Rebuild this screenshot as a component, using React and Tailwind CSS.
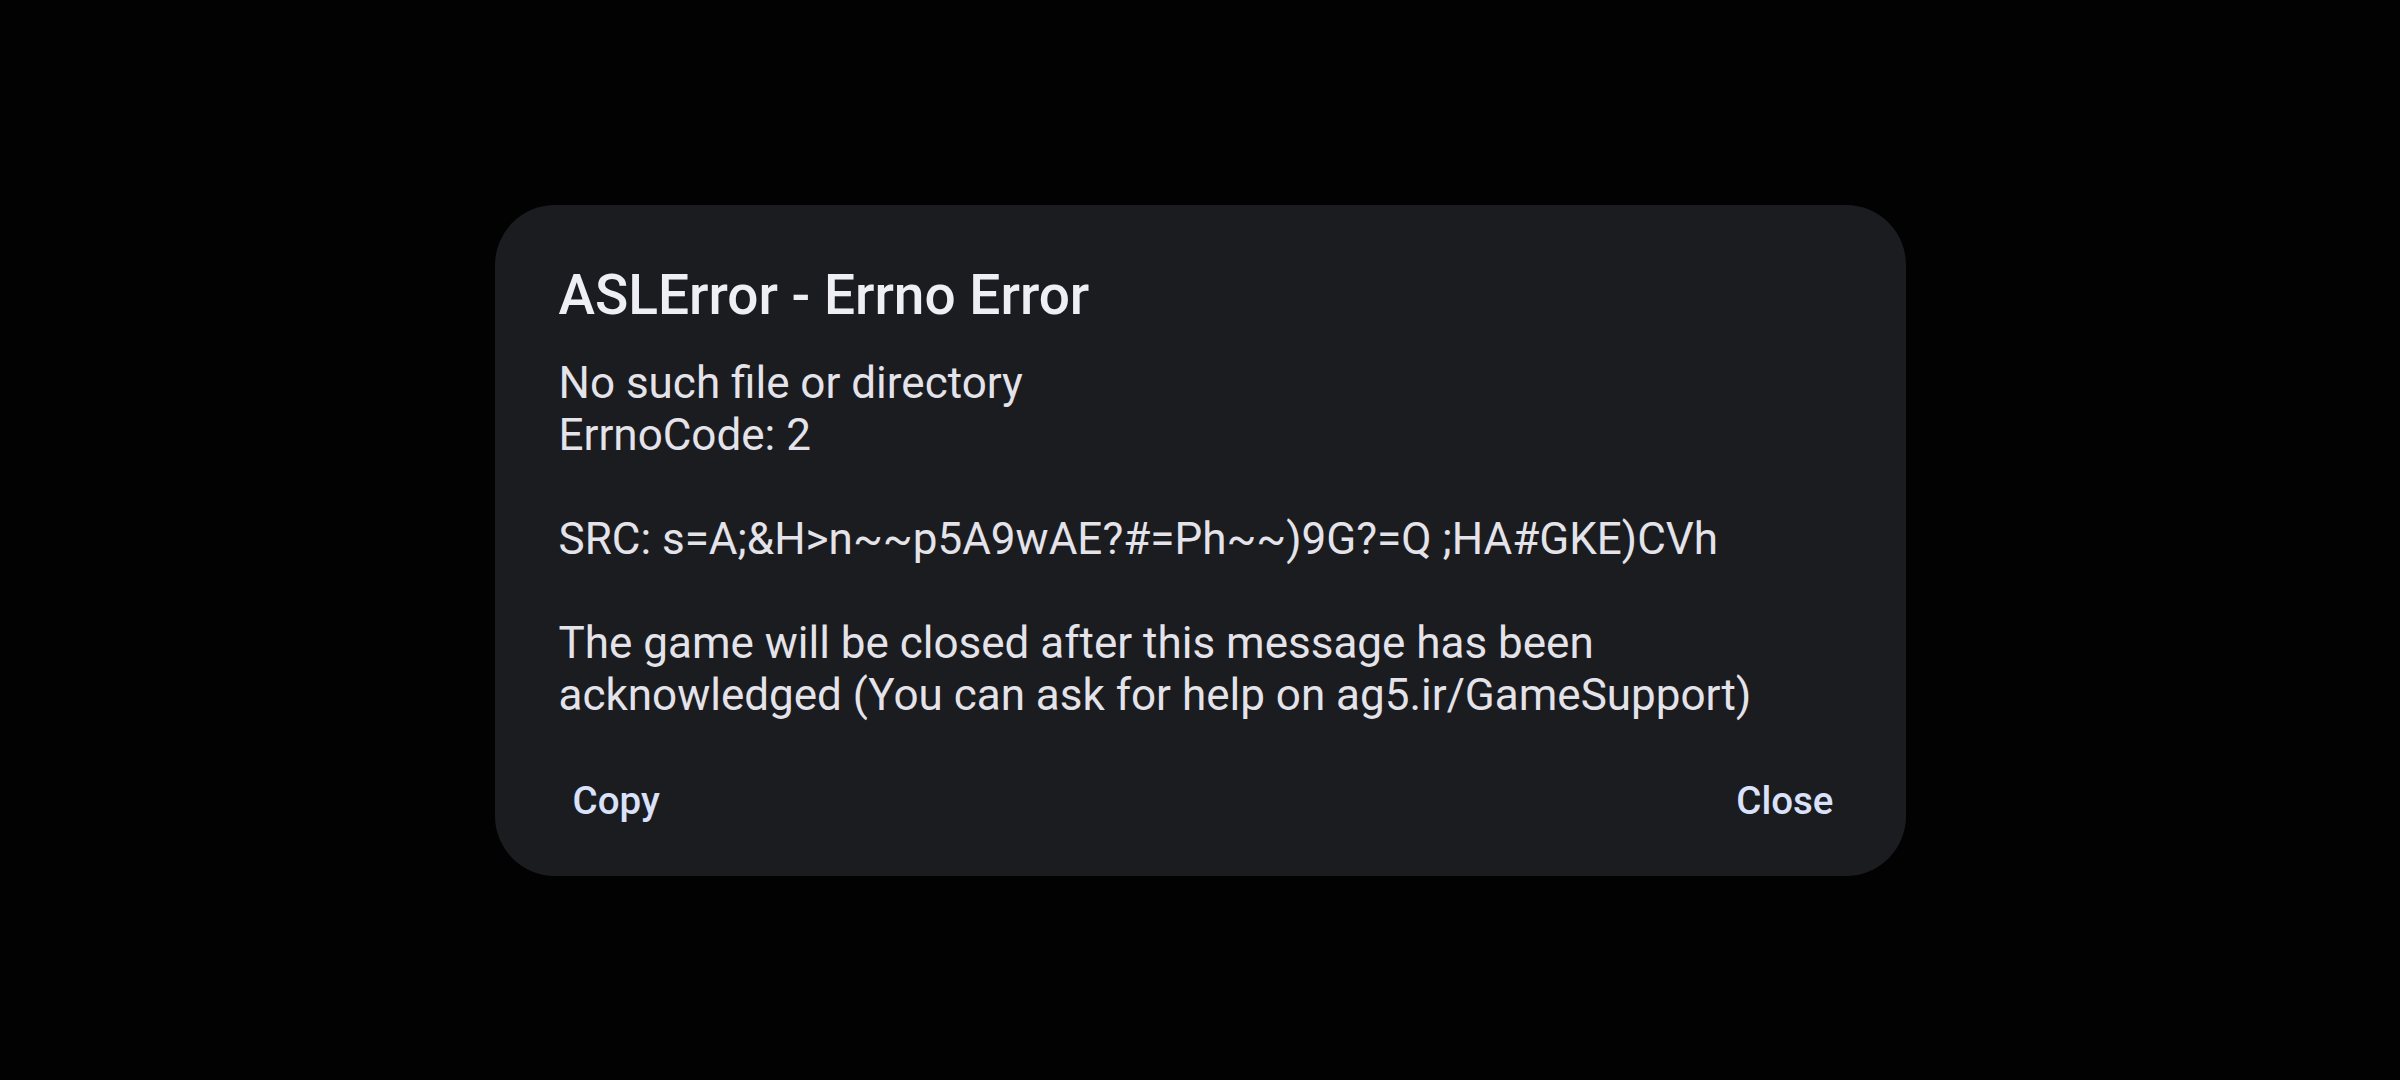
import React from 'react';

const font = { fontFamily: 'Roboto, "Noto Sans", sans-serif' };

function ErrorDialog() {
  const copy = () => {};
  const close = () => {};

  return (
    <div className="w-[1411px] rounded-[60px] bg-[#1b1c20] pt-[58px] pb-[49px]" style={font}>
      <div className="px-[64px]">
        <h2 className="text-[55px] leading-[64px] font-medium text-[#efeef4]">ASLError - Errno Error</h2>
        <div className="mt-[30px] text-[44px] leading-[52px] text-[#e4e3ea]">
          <div>No such file or directory</div>
          <div>ErrnoCode: 2</div>
          <div className="h-[52px]"></div>
          <div>SRC: s=A;&amp;H&gt;n~~p5A9wAE?#=Ph~~)9G?=Q ;HA#GKE)CVh</div>
          <div className="h-[52px]"></div>
          <div>The game will be closed after this message has been</div>
          <div>acknowledged (You can ask for help on ag5.ir/GameSupport)</div>
        </div>
      </div>
      <div className="mt-[54px] flex items-center justify-between px-[64px]">
        <button onClick={copy} className="ml-[14px] text-[38.5px] leading-[52px] font-medium text-[#d9e1fb]">
          Copy
        </button>
        <button onClick={close} className="mr-[8px] text-[38.5px] leading-[52px] font-medium text-[#d9e1fb]">
          Close
        </button>
      </div>
    </div>
  );
}

export default function App() {
  return (
    <div className="flex h-[1080px] w-full items-center justify-center bg-[#020202]">
      <ErrorDialog />
    </div>
  );
}
